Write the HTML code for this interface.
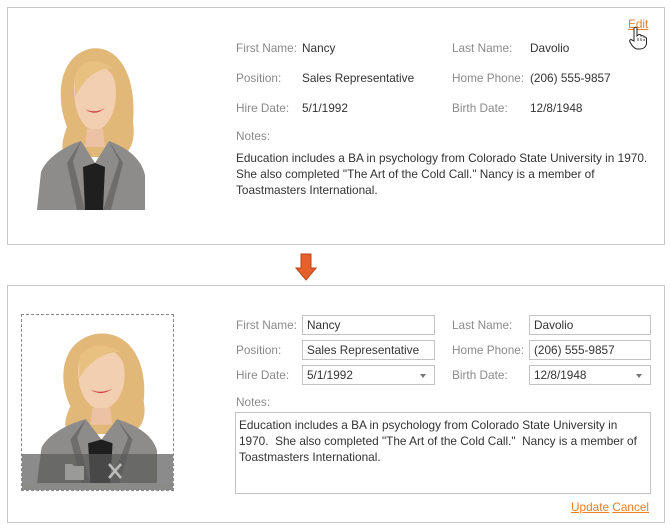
<!DOCTYPE html>
<html><head><meta charset="utf-8"><style>
*{margin:0;padding:0;box-sizing:border-box}
body{width:670px;height:529px;background:#fff;font-family:"Liberation Sans",sans-serif;font-size:11.8px;color:#333;position:relative;overflow:hidden}
.box{position:absolute;left:7px;width:658px;border:1px solid #c8c8c8;background:#fff}
.a{position:absolute;white-space:nowrap;line-height:14px}
.l{color:#8a8a8a}
.in{position:absolute;border:1px solid #c3c3c3;height:20px;line-height:18px;padding-left:4px;white-space:nowrap}
.dd::after{content:"";position:absolute;right:8px;top:8px;border-left:3px solid transparent;border-right:3px solid transparent;border-top:4px solid #777}
.lnk{color:#f07c22;text-decoration:underline}
</style></head><body>
<svg width="0" height="0" style="position:absolute"><defs>
<g id="p">
<path d="M30 90 C18 60 22 20 52 12 C82 6 100 40 96 85 C100 110 88 120 80 120 L30 120 C22 115 26 100 30 90Z" fill="#e2b878"/>
<path d="M38 40 C44 25 72 22 78 45 C82 70 72 92 58 94 C44 92 34 70 38 40Z" fill="#f3cfb2"/>
<path d="M38 40 C40 25 60 18 76 32 C66 30 50 36 38 60Z" fill="#e8c080"/>
<path d="M48 72 Q58 80 68 71 Q58 77 48 72Z" fill="#c44"/>
<path d="M50 92 L66 92 L68 110 L48 110Z" fill="#edc1a3"/>
<path d="M0 173 L4 135 C10 120 30 108 44 104 L58 126 L72 104 C88 110 104 120 108 138 L108 173Z" fill="#8e8c8a"/>
<path d="M46 130 L58 126 L68 130 L66 173 L48 173Z" fill="#1f1f1f"/>
<path d="M44 104 L36 124 L48 173 L40 173 L30 126Z" fill="#6f6d6b"/>
<path d="M72 104 L82 124 L66 173 L74 173 L86 126Z" fill="#6f6d6b"/>
</g></defs></svg>

<div class="box" style="top:7px;height:238px"></div>
<svg style="position:absolute;left:37px;top:37px" width="108" height="173" viewBox="0 0 108 173"><use href="#p"/></svg>
<div class="a lnk" style="left:628px;top:17px">Edit</div>
<svg style="position:absolute;left:628px;top:26px" width="20" height="24" viewBox="0 0 20 24"><path d="M6 2 Q7.5 0.5 9 2 L9 10 L10 9 Q11.5 8 13 9 L13 10 Q14.5 9 16 10.5 L16 11 Q17.5 10.5 18.5 12 L18.5 18 Q17 23 12 23 L9 23 Q5 22 2 16 Q1 14 3 13.5 L6 15Z" fill="#fff" stroke="#222" stroke-width="1"/><path d="M10 15V12M13 15V12M16 15V13" stroke="#222" stroke-width="0.8"/></svg>

<div class="a l" style="left:236px;top:41px">First Name:</div><div class="a" style="left:302px;top:41px">Nancy</div>
<div class="a l" style="left:452px;top:41px">Last Name:</div><div class="a" style="left:530px;top:41px">Davolio</div>
<div class="a l" style="left:236px;top:71px">Position:</div><div class="a" style="left:302px;top:71px">Sales Representative</div>
<div class="a l" style="left:452px;top:71px">Home Phone:</div><div class="a" style="left:530px;top:71px">(206) 555-9857</div>
<div class="a l" style="left:236px;top:101px">Hire Date:</div><div class="a" style="left:302px;top:101px">5/1/1992</div>
<div class="a l" style="left:452px;top:101px">Birth Date:</div><div class="a" style="left:530px;top:101px">12/8/1948</div>
<div class="a l" style="left:236px;top:129px">Notes:</div>
<div class="a" style="left:236px;top:150px;line-height:16px">Education includes a BA in psychology from Colorado State University in 1970.<br>She also completed "The Art of the Cold Call." Nancy is a member of<br>Toastmasters International.</div>

<svg style="position:absolute;left:295px;top:253px" width="22" height="28" viewBox="0 0 22 28"><path d="M6 1 H16 V15 H21 L11 27 L1 15 H6Z" fill="#e5602a" stroke="#b8441a" stroke-width="1"/></svg>

<div class="box" style="top:285px;height:238px"></div>
<div style="position:absolute;left:21px;top:314px;width:153px;height:177px;border:1px dashed #888;overflow:hidden">
<svg style="position:absolute;left:15px;top:8px" width="120" height="160" viewBox="0 0 108 173" preserveAspectRatio="none"><use href="#p"/></svg>
<div style="position:absolute;left:0;top:139px;width:151px;height:29px;background:rgba(90,90,90,.7)"></div>
<div style="position:absolute;left:0;top:168px;width:151px;height:8px;background:#8a8a88"></div>
<svg style="position:absolute;left:43px;top:145px" width="62" height="22" viewBox="0 0 62 22"><path d="M0 4H7L9 6H19V20H0Z" fill="#9a9a98"/><path d="M44 4L56 18M56 4L44 18" stroke="#bdbdbb" stroke-width="2.5"/></svg>
</div>

<div class="a l" style="left:236px;top:318px">First Name:</div><div class="in" style="left:302px;top:315px;width:133px">Nancy</div>
<div class="a l" style="left:452px;top:318px">Last Name:</div><div class="in" style="left:529px;top:315px;width:122px">Davolio</div>
<div class="a l" style="left:236px;top:343px">Position:</div><div class="in" style="left:302px;top:340px;width:133px">Sales Representative</div>
<div class="a l" style="left:452px;top:343px">Home Phone:</div><div class="in" style="left:529px;top:340px;width:122px">(206) 555-9857</div>
<div class="a l" style="left:236px;top:368px">Hire Date:</div><div class="in dd" style="left:302px;top:365px;width:133px">5/1/1992</div>
<div class="a l" style="left:452px;top:368px">Birth Date:</div><div class="in dd" style="left:529px;top:365px;width:122px">12/8/1948</div>
<div class="a l" style="left:236px;top:395px">Notes:</div>
<div style="position:absolute;left:235px;top:412px;width:416px;height:82px;border:1px solid #c3c3c3;padding:4px 3px;line-height:16px">Education includes a BA in psychology from Colorado State University in 1970.&nbsp; She also completed "The Art of the Cold Call."&nbsp; Nancy is a member of Toastmasters International.</div>
<div class="a" style="left:571px;top:500px"><span class="lnk">Update</span> <span class="lnk">Cancel</span></div>
</body></html>
